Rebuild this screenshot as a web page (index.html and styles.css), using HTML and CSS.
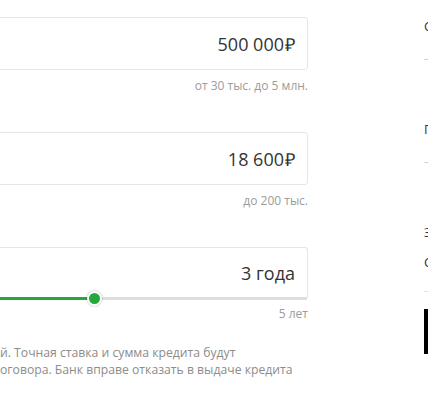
FILE: index.html
```html
<!DOCTYPE html>
<html lang="ru">
<head>
<meta charset="utf-8">
<link rel="stylesheet" href="styles.css">
</head>
<body>
<div class="page">
  <div class="form">
    <div class="field">
      <div class="box"><span class="label">Сумма кредита</span><span class="value">500&nbsp;000<span class="rub">₽</span></span></div>
      <div class="hint">от 30 тыс. до 5 млн.</div>
    </div>
    <div class="field">
      <div class="box"><span class="label">Доход</span><span class="value">18&nbsp;600<span class="rub">₽</span></span></div>
      <div class="hint">до 200 тыс.</div>
    </div>
    <div class="field">
      <div class="box box-slider">
        <span class="label">Срок кредита</span><span class="value">3 года</span>
        <div class="track"><div class="fill" style="width: 214px"></div><div class="thumb" style="left: 214px"></div></div>
      </div>
      <div class="hint">5 лет</div>
    </div>
    <div class="note">
      <div class="ln"><span class="pre">Расчёт носит предварительный характер и не учитывает всех условий</span>й. Точная ставка и сумма кредита будут</div>
      <div class="ln"><span class="pre">определены при заключении кредитного д</span>оговора. Банк вправе отказать в выдаче кредита</div>
    </div>
  </div>
  <div class="summary">
    <div class="s-item"><div class="s-label">Сумма кредита</div><div class="s-val">—</div></div>
    <div class="s-item"><div class="s-label">Платёж в месяц</div><div class="s-val">—</div></div>
    <div class="s-item s-last"><div class="s-label">Зарплатный клиент</div><div class="s-label">Ставка от 11,9%</div></div>
    <div class="s-btn">Оформить заявку</div>
  </div>
</div>
</body>
</html>
```
FILE: styles.css
```css
html, body {
  margin: 0;
  padding: 0;
  overflow: hidden;
  background: #ffffff;
  font-family: "Open Sans", "Liberation Sans", sans-serif;
}
.page {
  display: flex;
  margin-left: -120px;
  gap: 116px;
  width: 900px;
  padding-top: 17px;
}
.form {
  width: 428px;
  flex: none;
  display: flex;
  flex-direction: column;
}
.field {
  display: flex;
  flex-direction: column;
  margin-bottom: 38px;
}
.field:nth-child(3) {
  margin-bottom: 0;
}
.box {
  position: relative;
  height: 51px;
  border: 1px solid #e6e6e6;
  border-radius: 3px;
  display: flex;
  align-items: center;
  justify-content: space-between;
  padding: 0 12px 0 16px;
  box-sizing: content-box;
}
.box-slider {
  height: 50px;
  border-bottom: none;
  border-radius: 3px 3px 0 0;
}
.label {
  font-size: 12px;
  color: #fafafa;
  align-self: flex-start;
  margin-top: 4px;
}
.value {
  font-size: 18px;
  color: #333333;
}
.rub {
  margin-left: 1px;
}
.hint {
  text-align: right;
  font-size: 12px;
  line-height: 16px;
  color: #9b9b9b;
  margin-top: 8px;
}
.track {
  position: absolute;
  left: 0;
  right: 0;
  bottom: -2px;
  height: 3px;
  background: #dedede;
}
.fill {
  height: 3px;
  background: #24a83c;
}
.thumb {
  position: absolute;
  top: -6px;
  width: 11px;
  height: 11px;
  margin-left: -8px;
  border-radius: 50%;
  background: #24a83c;
  border: 2.5px solid #ffffff;
  box-shadow: 0 0 2px rgba(0, 0, 0, 0.35);
}
.note {
  margin-top: 22px;
  padding-left: 120px;
  font-size: 12.2px;
  line-height: 17px;
  color: #8c8c8c;
}
.ln {
  display: flex;
  white-space: nowrap;
}
.pre {
  width: 0;
  display: flex;
  justify-content: flex-end;
  white-space: nowrap;
}
.summary {
  width: 260px;
  flex: none;
  display: flex;
  flex-direction: column;
  color: #333333;
  font-size: 13px;
}
.s-item {
  display: flex;
  flex-direction: column;
  gap: 15px;
  margin-bottom: 54px;
}
.s-label {
  line-height: 18px;
}
.s-val {
  color: #cccccc;
  line-height: 16px;
}
.s-last {
  margin-bottom: 0;
  gap: 12px;
  padding-bottom: 20px;
  border-bottom: 1px solid #e3e3e3;
}
.s-btn {
  margin-top: 17px;
  height: 45px;
  background: #000000;
  color: #ffffff;
  display: flex;
  align-items: center;
  padding-left: 20px;
}
```
